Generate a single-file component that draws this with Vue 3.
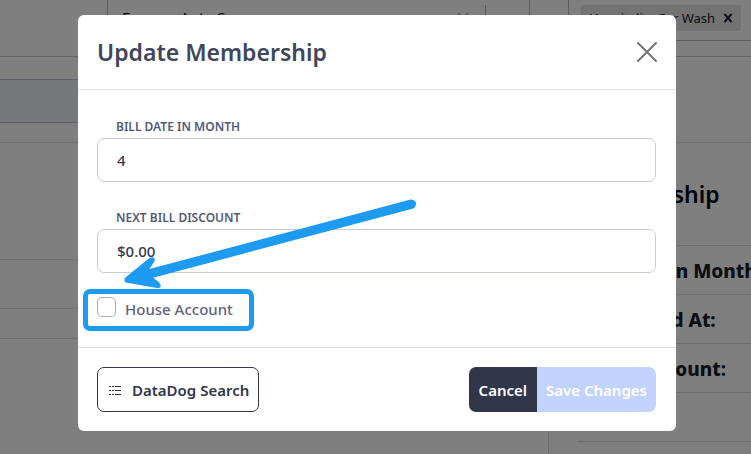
<script setup>
import { ref } from 'vue'

const billDate = ref('4')
const discount = ref('$0.00')
const houseAccount = ref(false)
const details = ['Bill Date in Month', 'Last Billed At:', 'Next Discount:', '']
</script>

<template>
  <div class="page">
    <div class="filters">
      <div class="filter"></div>
      <div class="filter select">
        <span class="value">Express Auto Spa</span>
        <svg class="clear" viewBox="0 0 12 12"><path d="M1 1L11 11M11 1L1 11" /></svg>
        <span class="separator"></span>
      </div>
      <div class="filter"></div>
      <div class="filter tags">
        <span class="tag">Hospitality Car Wash
          <svg class="remove" viewBox="0 0 10 10"><path d="M1.5 1L8.5 9M8.5 1L1.5 9" /></svg>
        </span>
      </div>
    </div>
    <div class="strip"></div>
    <div class="columns">
      <div class="left">
        <div class="space"></div>
        <div class="line"></div>
        <div class="line short"></div>
      </div>
      <section class="right">
        <h2>Membership</h2>
        <div v-for="(item, i) in details" :key="i" class="detail">{{ item }}</div>
      </section>
    </div>
  </div>

  <div class="overlay">
    <form class="modal" role="dialog" aria-labelledby="modal-title" @submit.prevent>
      <header>
        <h1 id="modal-title">Update Membership</h1>
        <button type="button" class="close" aria-label="Close">
          <svg viewBox="0 0 20 20"><path d="M1 1L19 19M19 1L1 19" /></svg>
        </button>
      </header>
      <div class="body">
        <div class="field">
          <label for="bill-date">BILL DATE IN MONTH</label>
          <input id="bill-date" v-model="billDate" type="text" />
        </div>
        <div class="field">
          <label for="discount">NEXT BILL DISCOUNT</label>
          <input id="discount" v-model="discount" type="text" />
        </div>
        <div class="check">
          <input id="house" v-model="houseAccount" type="checkbox" />
          <label for="house">House Account</label>
          <span class="highlight"></span>
          <svg class="arrow" viewBox="0 0 300 96">
            <path d="M6 81L30 61.500Q34 59.500 33 63L26 73.500L291 3Q297 4 293 9L30 79L38 85.500Q41 89 37 88.500L6 83Z" />
          </svg>
        </div>
      </div>
      <footer>
        <button type="button" class="search">
          <svg viewBox="0 0 12 10">
            <path d="M0 1.500H2M3 1.500H5M6 1.500H12M0 5.500H2M3 5.500H5M6 5.500H12M0 9.500H2M3 9.500H5M6 9.500H12" />
          </svg>
          DataDog Search
        </button>
        <div class="actions">
          <button type="button" class="cancel">Cancel</button>
          <button type="submit" class="save" disabled>Save Changes</button>
        </div>
      </footer>
    </form>
  </div>
</template>

<style>
body {
  margin: 0;
  background: #fff;
  overflow: hidden;
}
</style>

<style scoped>
* {
  box-sizing: border-box;
}
.page,
.overlay,
button,
input {
  font-family: "Noto Sans", "Open Sans", sans-serif;
}
.page {
  color: #181c2c;
}
.filters {
  display: grid;
  grid-template-columns: 107px 422px 39px 1fr;
  height: 57px;
  border-bottom: 1px solid #c4c8d4;
}
.filter + .filter {
  border-left: 1px solid #bcbcc2;
}
.select {
  display: flex;
  align-items: flex-start;
  padding: 5px 43px 0 14px;
  font-size: 15px;
  line-height: 24px;
}
.value {
  flex: 1;
}
.clear {
  width: 12px;
  margin: 7px 16px 0 0;
  fill: none;
  stroke: #c4c4c4;
  stroke-width: 2;
}
.separator {
  width: 1px;
  height: 26px;
  background: #b4b4b4;
}
.tags {
  height: 41px;
  padding: 5px 10px 0 12px;
  border-bottom: 1px solid #bcbcc2;
}
.tag {
  display: flex;
  align-items: center;
  justify-content: space-between;
  height: 26px;
  padding: 0 8px;
  border-radius: 2px;
  background: #e6e6e6;
  font-size: 13px;
  white-space: nowrap;
}
.remove {
  width: 10px;
  fill: none;
  stroke: #181c2c;
  stroke-width: 2;
}
.strip {
  width: 548px;
  height: 44px;
  margin: 22px 0 19px;
  border: solid #b8c0cc;
  border-width: 1px 0;
  background: #ecf1f6;
}
.columns {
  display: grid;
  grid-template-columns: 548px 1fr;
  border-top: 1px solid #dcdce4;
}
.space {
  height: 117px;
  border-bottom: 1px solid #dcdce4;
}
.line {
  height: 49px;
  border-bottom: 1px solid #dcdce4;
}
.short {
  height: 30px;
}
.right {
  height: 312px;
  padding-left: 29px;
  border-left: 1px solid #dcdce4;
}
h2 {
  height: 103px;
  margin: 0;
  border-bottom: 1px solid #dcdce4;
  font-size: 23px;
  font-weight: 600;
  line-height: 102px;
  color: #000814;
}
.detail {
  height: 49px;
  padding-left: 6px;
  border-bottom: 1px solid #dcdce4;
  font-size: 19px;
  font-weight: 800;
  line-height: 50px;
  white-space: nowrap;
}
.overlay {
  position: fixed;
  inset: 0;
  padding: 15px 75px 0 78px;
  background: rgba(0, 0, 0, 0.5);
}
.modal {
  position: relative;
  border-radius: 6px;
  background: #fff;
}
header {
  display: flex;
  align-items: center;
  justify-content: space-between;
  height: 75px;
  padding: 0 19px;
  border-bottom: 1px solid #dee2e6;
}
h1 {
  margin: 0;
  font-size: 23px;
  font-weight: 600;
  line-height: 32px;
  color: #40465c;
}
button {
  margin: 0;
  padding: 0;
  border: 0;
  font-size: 15px;
  font-weight: 600;
  white-space: nowrap;
}
.close {
  display: flex;
  background: none;
}
.close svg {
  width: 20px;
  height: 20px;
  fill: none;
  stroke: #757575;
  stroke-width: 2;
  stroke-linecap: round;
}
.body {
  display: flex;
  flex-direction: column;
  padding: 29px 20px 26px 19px;
}
.field {
  display: flex;
  flex-direction: column;
  gap: 3px;
  margin-bottom: 28px;
}
.field label {
  padding-left: 19px;
  font-size: 12px;
  font-weight: 600;
  line-height: 16px;
  color: #535b78;
}
.field input {
  width: 100%;
  height: 44px;
  margin: 0;
  padding: 0 19px;
  border: 1px solid #c8ccd8;
  border-radius: 7px;
  font-size: 15px;
  font-weight: 500;
  color: #343a4c;
}
.check {
  position: relative;
  display: flex;
  align-items: flex-start;
  gap: 9px;
  margin-top: -4px;
}
.check input {
  appearance: none;
  width: 19px;
  height: 20px;
  margin: 0;
  border: 1px solid #a6abbd;
  border-radius: 5px;
  background: #fff;
}
.check label {
  font-size: 15px;
  font-weight: 500;
  line-height: 24px;
  color: #5e6480;
}
.highlight {
  position: absolute;
  top: -8px;
  left: -14px;
  width: 171px;
  height: 42px;
  border: 5px solid #1d9bf0;
  border-radius: 7px;
  pointer-events: none;
}
.arrow {
  position: absolute;
  top: -99px;
  left: 23px;
  width: 300px;
  height: 96px;
  fill: #1d9bf0;
  stroke: #1d9bf0;
  stroke-width: 3;
  stroke-linejoin: round;
  pointer-events: none;
}
footer {
  display: flex;
  justify-content: space-between;
  padding: 19px 20px 19px 19px;
  border-top: 1px solid #dee2e6;
}
.search {
  display: flex;
  align-items: center;
  gap: 11px;
  height: 45px;
  padding: 0 9px 0 11px;
  border: 1px solid #31364a;
  border-radius: 7px;
  background: #fff;
  color: #31364a;
}
.search svg {
  width: 12px;
  height: 10px;
  fill: none;
  stroke: #31364a;
  stroke-width: 1;
}
.actions {
  display: flex;
  height: 45px;
  border-radius: 7px;
  overflow: hidden;
}
.cancel {
  padding: 0 10px;
  background: #31364a;
  color: #fff;
}
.save {
  padding: 0 9px;
  background: #c3d3ff;
  color: #fff;
}
</style>
